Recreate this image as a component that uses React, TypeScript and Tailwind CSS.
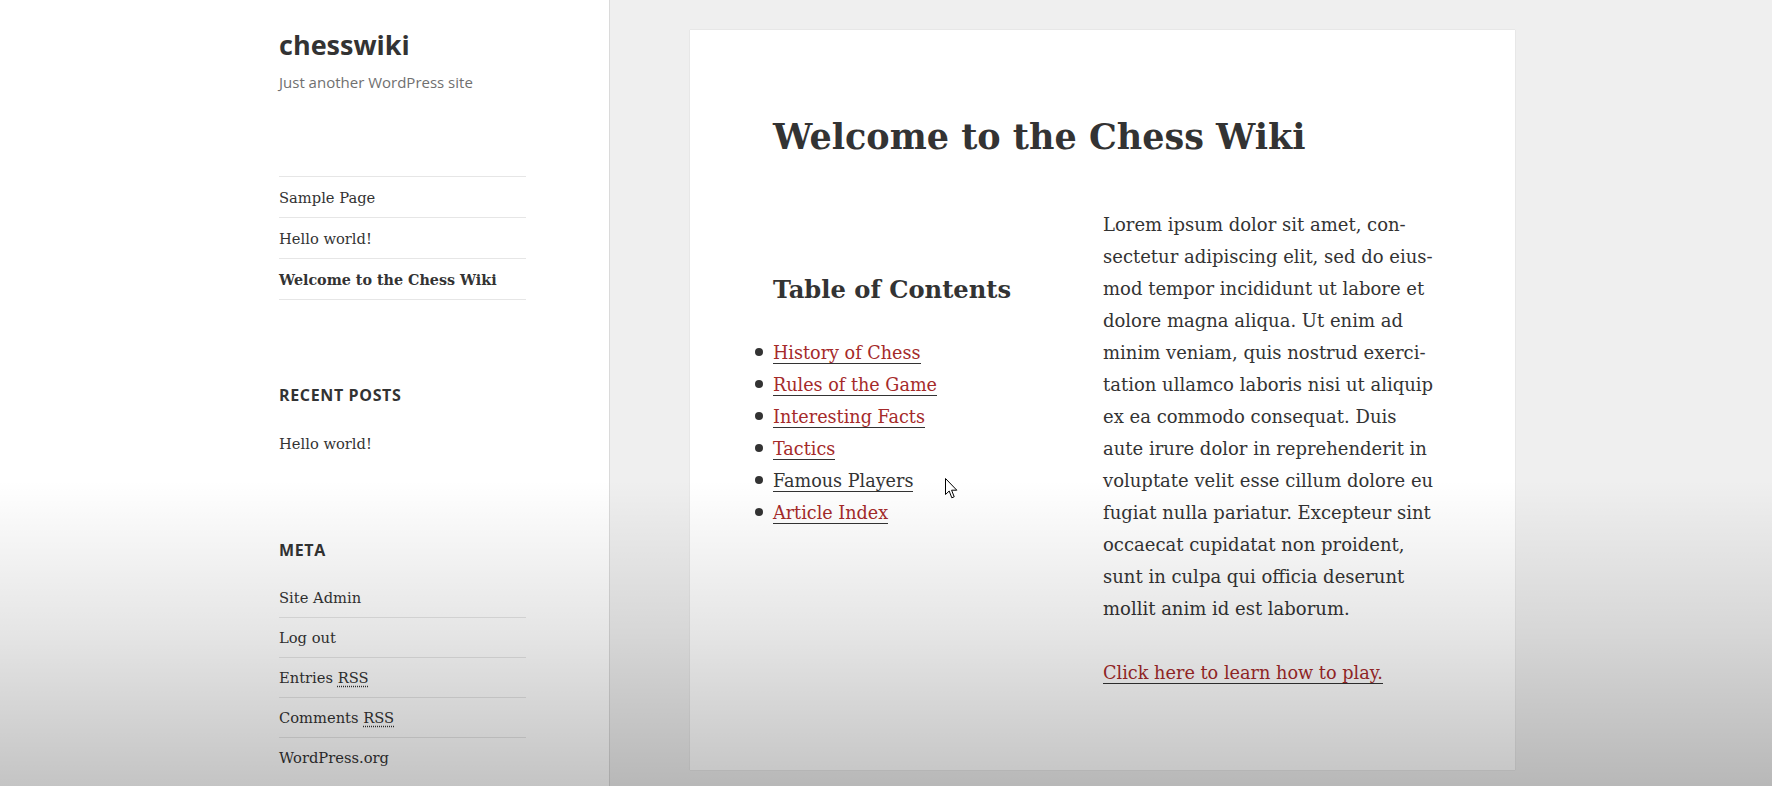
import React from "react";

const serif = "font-['DejaVu_Serif',serif]";
const sans = "font-['Open_Sans',sans-serif]";

const navItems = [
  { label: "Sample Page", current: false },
  { label: "Hello world!", current: false },
  { label: "Welcome to the Chess Wiki", current: true },
];

const toc = [
  { label: "History of Chess", red: true },
  { label: "Rules of the Game", red: true },
  { label: "Interesting Facts", red: true },
  { label: "Tactics", red: true },
  { label: "Famous Players", red: false },
  { label: "Article Index", red: true },
];

const lorem = [
  "Lorem ipsum dolor sit amet, con-",
  "sectetur adipiscing elit, sed do eius-",
  "mod tempor incididunt ut labore et",
  "dolore magna aliqua. Ut enim ad",
  "minim veniam, quis nostrud exerci-",
  "tation ullamco laboris nisi ut aliquip",
  "ex ea commodo consequat. Duis",
  "aute irure dolor in reprehenderit in",
  "voluptate velit esse cillum dolore eu",
  "fugiat nulla pariatur. Excepteur sint",
  "occaecat cupidatat non proident,",
  "sunt in culpa qui officia deserunt",
  "mollit anim id est laborum.",
];

function Rss() {
  return <span className="underline decoration-dotted underline-offset-[3px]">RSS</span>;
}

function Sidebar() {
  return (
    <aside className="w-[610px] shrink-0 border-r border-[#dadada] bg-white pl-[279px] text-[#333]">
      <div className="w-[247px]">
        <div className={`${sans} pt-[27px] text-[27px] font-bold leading-[36px]`}>chesswiki</div>
        <div className={`${sans} mt-[8px] text-[15px] leading-[22px] text-[#707070]`}>
          Just another WordPress site
        </div>

        <ul className={`${serif} mt-[83px] border-t border-[#e6e6e6] text-[14.7px] leading-[24px]`}>
          {navItems.map((item) => (
            <li
              key={item.label}
              className={`border-b border-[#e6e6e6] pt-[9px] pb-[7px] ${item.current ? "text-[14.3px] font-bold" : ""}`}
            >
              {item.label}
            </li>
          ))}
        </ul>

        <h2 className={`${sans} mt-[83px] text-[16px] font-bold uppercase leading-[24px] tracking-[0.04em]`}>
          Recent Posts
        </h2>
        <div className={`${serif} mt-[25px] text-[14.7px] leading-[24px]`}>Hello world!</div>

        <h2 className={`${sans} mt-[82px] text-[16px] font-bold uppercase leading-[24px] tracking-[0.04em]`}>
          Meta
        </h2>
        <ul className={`${serif} mt-[15px] text-[14.7px] leading-[24px]`}>
          <li className="border-t border-transparent pt-[8px] pb-[7px]">Site Admin</li>
          <li className="border-t border-[#e6e6e6] pt-[8px] pb-[7px]">Log out</li>
          <li className="border-t border-[#e6e6e6] pt-[8px] pb-[7px]">
            Entries <Rss />
          </li>
          <li className="border-t border-[#e6e6e6] pt-[8px] pb-[7px]">
            Comments <Rss />
          </li>
          <li className="border-t border-[#e6e6e6] pt-[8px] pb-[7px]">WordPress.org</li>
        </ul>
      </div>
    </aside>
  );
}

function Article() {
  return (
    <article className="h-[740px] w-[825px] bg-white pl-[83px] text-[#333] shadow-[0_0_1px_rgba(0,0,0,0.2)]">
      <h1 className={`${serif} pt-[83px] text-[35px] font-bold leading-[48px]`}>Welcome to the Chess Wiki</h1>

      <div className={`${serif} flex text-[18px] leading-[32px]`}>
        <div className="w-[330px] shrink-0">
          <h2 className="mt-[111px] text-[24.2px] font-bold leading-[36px]">Table of Contents</h2>
          <ul className="mt-[29px] text-[17.6px]">
            {toc.map((t) => (
              <li
                key={t.label}
                className="relative before:absolute before:left-[-18px] before:top-[11px] before:h-[8px] before:w-[8px] before:rounded-full before:bg-[#333] before:content-['']"
              >
                <a className={`border-b border-[#333] ${t.red ? "text-[#a52a2a]" : "text-[#333]"}`}>{t.label}</a>
              </li>
            ))}
          </ul>
        </div>
        <div className="w-[330px] shrink-0 pt-[48px]">
          <p className="whitespace-nowrap">
            {lorem.map((line, i) => (
              <React.Fragment key={i}>
                {line}
                {i < lorem.length - 1 && <br />}
              </React.Fragment>
            ))}
          </p>
          <p className="mt-[32px] text-[17.7px]">
            <a className="border-b border-[#333] text-[#a52a2a]">Click here to learn how to play.</a>
          </p>
        </div>
      </div>
    </article>
  );
}

export default function App() {
  return (
    <div className="relative flex h-[786px] w-[1772px] overflow-hidden bg-[#efefef]">
      <Sidebar />
      <main className="pl-[80px] pt-[30px]">
        <Article />
      </main>

      {/* video-style vignette at the bottom */}
      <div className="pointer-events-none absolute inset-x-0 top-[480px] bottom-0 bg-linear-to-b from-transparent via-[rgba(0,0,0,0.1)] to-[rgba(0,0,0,0.23)]" />

      {/* mouse pointer */}
      <svg className="pointer-events-none absolute left-[945px] top-[478px]" width="13" height="21" viewBox="0 0 13 21">
        <path d="M0.5 0.5 L0.5 16.5 L4.2 13 L6.8 19.8 L9.2 18.8 L6.6 12.2 L11.8 12.2 Z" fill="#fff" stroke="#000" strokeWidth="1" strokeLinejoin="miter" />
      </svg>
    </div>
  );
}
